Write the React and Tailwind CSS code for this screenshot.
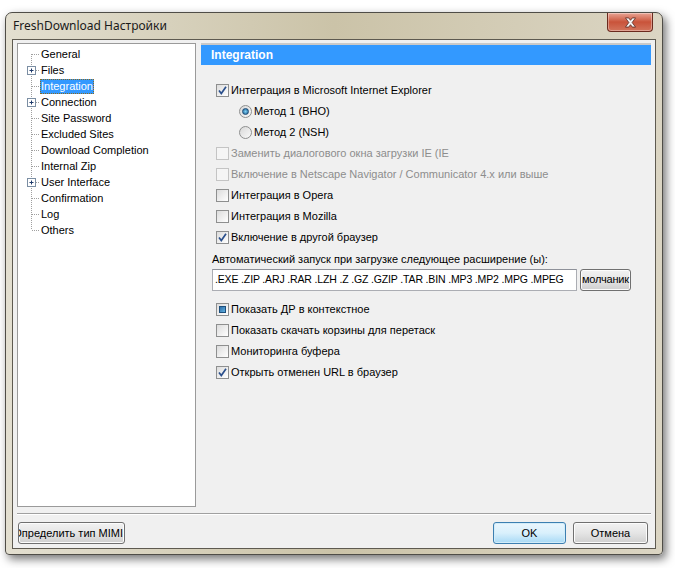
import React from "react";

const font = { fontFamily: '"Liberation Sans", Arial, sans-serif' };

const tree = [
  { label: "General" },
  { label: "Files", plus: true },
  { label: "Integration", selected: true },
  { label: "Connection", plus: true },
  { label: "Site Password" },
  { label: "Excluded Sites" },
  { label: "Download Completion" },
  { label: "Internal Zip" },
  { label: "User Interface", plus: true },
  { label: "Confirmation" },
  { label: "Log" },
  { label: "Others" },
];

function TreeLines({ first, last, plus }) {
  return (
    <svg width="22" height="16" className="shrink-0">
      <line
        x1="13.5"
        y1={first ? 8 : 0}
        x2="13.5"
        y2={last ? 8 : 16}
        stroke="#a0a0a0"
        strokeDasharray="1 1"
      />
      <line x1="14" y1="8.5" x2="22" y2="8.5" stroke="#a0a0a0" strokeDasharray="1 1" />
      {plus && (
        <g>
          <rect x="9.5" y="4.5" width="8" height="8" fill="#fff" stroke="#7b8ea3" />
          <line x1="11.5" y1="8.5" x2="15.5" y2="8.5" stroke="#1f3a6b" />
          <line x1="13.5" y1="6.5" x2="13.5" y2="10.5" stroke="#1f3a6b" />
        </g>
      )}
    </svg>
  );
}

function Checkbox({ checked, disabled, filled }) {
  return (
    <span
      className={
        "flex h-[13px] w-[13px] shrink-0 items-center justify-center border " +
        (disabled
          ? "border-[#c4c4c4] bg-[#f5f5f5]"
          : "border-[#8e8f8f] bg-linear-to-br from-[#dcdcdc] to-[#ffffff]")
      }
    >
      {checked && (
        <svg width="11" height="11" viewBox="0 0 11 11">
          <path d="M2 5.5 L4.3 8.5 L9 1.8" fill="none" stroke="#2a4f8c" strokeWidth="1.7" />
        </svg>
      )}
      {filled && <span className="h-[7px] w-[7px] border border-[#1d4f7d] bg-linear-to-br from-[#2f6fa8] to-[#5fb0e0]" />}
    </span>
  );
}

function CheckRow({ label, checked, disabled, filled }) {
  return (
    <div className="flex h-[21px] items-center">
      <Checkbox checked={checked} disabled={disabled} filled={filled} />
      <span className={"ml-[2px] text-[11px] " + (disabled ? "text-[#8d8d8d]" : "text-black")}>{label}</span>
    </div>
  );
}

function Radio({ label, checked }) {
  return (
    <div className="flex h-[21px] items-center pl-[23px]">
      <span className="flex h-[13px] w-[13px] shrink-0 items-center justify-center rounded-full border border-[#8e8f8f] bg-linear-to-br from-[#d8d8d8] to-[#fafafa]">
        {checked && (
          <span className="h-[7px] w-[7px] rounded-full border border-[#1e4c77] bg-radial from-[#7fd1f5] to-[#1b5f93]" />
        )}
      </span>
      <span className="ml-[2px] text-[11px] text-black">{label}</span>
    </div>
  );
}

function Button({ children, primary, className }) {
  return (
    <button
      className={
        "flex h-[22px] items-center overflow-hidden whitespace-nowrap rounded-[3px] border text-[11px] text-black " +
        (primary
          ? "border-[#3c7fb1] bg-linear-to-b from-[#eaf6fd] via-[#d9f0fc] to-[#a7d9f5] shadow-[inset_0_0_0_1px_#d2ecf9]"
          : "border-[#707070] bg-linear-to-b from-[#f2f2f2] via-[#e5e5e5] to-[#cfcfcf] shadow-[inset_0_0_0_1px_#fcfcfc]") +
        " " +
        className
      }
    >
      {children}
    </button>
  );
}

export default function App() {
  return (
    <div className="h-[568px] w-[675px] overflow-hidden bg-white pl-[5px] pt-[12px]" style={font}>
      <div className="relative flex h-[543px] w-[658px] flex-col rounded-t-[7px] rounded-b-[4px] border border-[#4f4d47] bg-linear-to-r from-[#e3dfd0] via-[#cbc3a8] to-[#dbd5c3] shadow-[3px_4px_10px_rgba(0,0,0,0.55)]">
        <div className="flex h-[26px] items-center pl-[7px]">
          <span className="text-[12px] text-[#1a1a1a]" style={{ fontFamily: '"Noto Sans", "Liberation Sans", sans-serif' }}>
            FreshDownload Настройки
          </span>
        </div>

        <div className="absolute right-[9px] top-[0px] flex h-[19px] w-[46px] items-center justify-center rounded-b-[4px] border border-t-0 border-[#6b2a1e] bg-linear-to-b from-[#e8a393] via-[#c9533a] to-[#d2745c] shadow-[inset_0_0_0_1px_rgba(255,255,255,0.35)]">
          <svg width="13" height="11" viewBox="0 0 14 12">
            <path
              d="M1.5 1 H5 L7 3.6 L9 1 H12.5 L8.8 6 L12.5 11 H9 L7 8.4 L5 11 H1.5 L5.2 6 Z"
              fill="#f4f4f4"
              stroke="#5a2a22"
              strokeWidth="0.9"
            />
          </svg>
        </div>

        <div className="mx-[6px] mb-[5px] flex flex-1 flex-col border border-[#5e5a50] bg-[#f0f0f0]">
          <div className="flex pl-[4px] pt-[3px]">
            <div className="flex h-[464px] w-[179px] flex-col border border-[#9a9a9a] bg-white pt-[2px]">
              {tree.map((t, i) => (
                <div key={t.label} className="flex h-[16px] items-center">
                  <TreeLines first={i === 0} last={i === tree.length - 1} plus={t.plus} />
                  <span
                    className={
                      "flex h-[15px] items-center text-[11px] " +
                      (t.selected
                        ? "border border-dotted border-[#8a6a20] bg-[#3399ff] text-white"
                        : "border border-transparent text-black")
                    }
                  >
                    {t.label}
                  </span>
                </div>
              ))}
            </div>

            <div className="ml-[5px] flex w-[450px] flex-col">
              <div className="flex h-[22px] items-center border-t-2 border-[#c9c9c9] bg-[#3399ff] pl-[10px]">
                <span className="text-[12px] font-bold text-white">Integration</span>
              </div>
              <div className="flex flex-col pl-[15px] pt-[15px]">
                <CheckRow label="Интеграция в Microsoft Internet Explorer" checked />
                <Radio label="Метод 1 (BHO)" checked />
                <Radio label="Метод 2 (NSH)" />
                <CheckRow label="Заменить диалогового окна загрузки IE (IE" disabled />
                <CheckRow label="Включение в Netscape Navigator / Communicator 4.x или выше" disabled />
                <CheckRow label="Интеграция в Opera" />
                <CheckRow label="Интеграция в Mozilla" />
                <CheckRow label="Включение в другой браузер" checked />
              </div>
              <div className="mt-[3px] pl-[11px] text-[11px] text-black">
                Автоматический запуск при загрузке следующее расширение (ы):
              </div>
              <div className="mt-[1px] flex items-center pl-[11px]">
                <div className="flex h-[22px] w-[365px] items-center overflow-hidden whitespace-nowrap border border-[#abadb3] border-t-[#8e9199] bg-white pl-[2px] text-[10.5px] tracking-[-0.15px] text-black">
                  .EXE .ZIP .ARJ .RAR .LZH .Z .GZ .GZIP .TAR .BIN .MP3 .MP2 .MPG .MPEG
                </div>
                <Button className="ml-[3px] w-[51px] justify-start pl-[1px] text-[10.5px] tracking-[-0.2px]">молчаник</Button>
              </div>
              <div className="flex flex-col pl-[15px] pt-[8px]">
                <CheckRow label="Показать ДР в контекстное" filled />
                <CheckRow label="Показать скачать корзины для перетаск" />
                <CheckRow label="Мониторинга буфера" />
                <CheckRow label="Открыть отменен URL в браузер" checked />
              </div>
            </div>
          </div>

          <div className="ml-[4px] mr-[4px] mt-[6px] h-[2px] border-t border-b border-t-[#a0a0a0] border-b-white" />

          <div className="flex items-start pl-[5px] pt-[7px]">
            <Button className="w-[107px] justify-end pr-[1px]">
              <span className="shrink-0">Определить тип MIMI</span>
            </Button>
            <div className="flex-1" />
            <Button primary className="w-[73px] justify-center">OK</Button>
            <Button className="ml-[7px] mr-[7px] w-[75px] justify-center">Отмена</Button>
          </div>
        </div>
      </div>
    </div>
  );
}
